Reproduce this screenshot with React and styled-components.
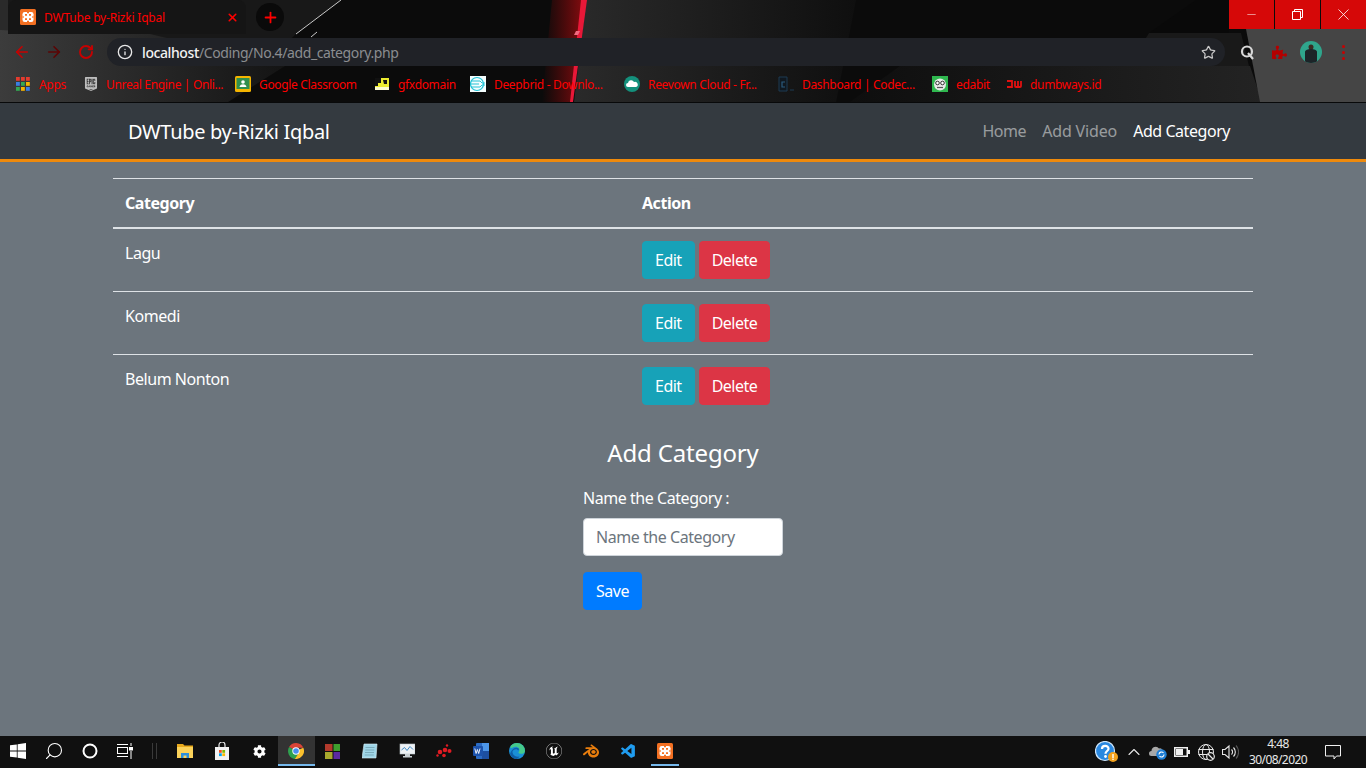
import React from 'react';
import styled, { createGlobalStyle } from 'styled-components';
import { ArrowLeft, ArrowRight, RotateCw, Info, Star, X, Plus, Minus, Search, ChevronUp } from 'lucide-react';
import { SiBlender, SiUnrealengine, SiEpicgames } from 'react-icons/si';
import { VscVscode } from 'react-icons/vsc';
import { FaPuzzlePiece, FaCog } from 'react-icons/fa';

const FONT = '"Noto Sans", "Open Sans", sans-serif';

const GlobalStyle = createGlobalStyle`
  html, body {
    margin: 0;
    padding: 0;
    height: 100%;
  }
  body {
    font-family: ${FONT};
    font-size: 16px;
    letter-spacing: -0.45px;
    color: #fff;
    background: #6c757d;
  }
  * {
    box-sizing: border-box;
  }
`;

const Page = styled.div`
  height: 768px;
  width: 1366px;
  overflow: hidden;
  display: flex;
  flex-direction: column;
`;

/* browser frame */
const BrowserFrame = styled.header`
  position: relative;
  height: 103px;
  flex: none;
  background: #0c0c0c;
  border-bottom: 1px solid #08090a;
`;

const Wallpaper = styled.div`
  position: absolute;
  inset: 0;
  height: 102px;
  overflow: hidden;
`;

const FrameContent = styled.div`
  position: relative;
`;

const TabStrip = styled.div`
  height: 34px;
  display: flex;
  align-items: flex-start;
  justify-content: space-between;
`;

const TabGroup = styled.div`
  display: flex;
  align-items: center;
  padding-left: 8px;
  height: 34px;
`;

const Tab = styled.div`
  width: 238px;
  height: 34px;
  display: flex;
  align-items: center;
  padding: 0 7px 0 12px;
  background: #151515;
  border-radius: 8px 8px 0 0;
  color: #f00;
  font-size: 12px;
`;

const TabTitle = styled.span`
  flex: 1;
  margin-left: 8px;
  letter-spacing: -0.2px;
`;

const NewTab = styled.div`
  width: 28px;
  height: 28px;
  border-radius: 50%;
  margin-left: 10px;
  background: #0a0a0a;
  color: #f00;
  display: flex;
  align-items: center;
  justify-content: center;
`;

const WindowControls = styled.div`
  display: flex;
  gap: 1px;
`;

const WindowButton = styled.div`
  width: 45px;
  height: 29px;
  background: #d60808;
  color: #fff;
  display: flex;
  align-items: center;
  justify-content: center;
`;

const Toolbar = styled.div`
  height: 36px;
  display: flex;
  align-items: center;
  padding-left: 6px;
`;

const NavIcon = styled.div`
  width: 32px;
  display: flex;
  justify-content: center;
  color: ${(p) => p.$color || '#c70000'};
`;

const Omnibox = styled.div`
  width: 1118px;
  height: 28px;
  margin-left: 5px;
  border-radius: 14px;
  background: #202227;
  display: flex;
  align-items: center;
  padding: 0 9px 0 10px;
  font-size: 14px;
  color: #8b8d90;
`;

const Url = styled.div`
  flex: 1;
  margin-left: 9px;
  letter-spacing: -0.4px;
  b {
    font-weight: 500;
    color: #f2f2f2;
  }
`;

const ToolIcons = styled.div`
  display: flex;
  align-items: center;
  margin-left: 6px;
`;

const ToolIcon = styled.div`
  width: 32px;
  height: 28px;
  display: flex;
  align-items: center;
  justify-content: center;
`;

const Avatar = styled.div`
  width: 22px;
  height: 22px;
  border-radius: 50%;
  background: #2fa58c;
  overflow: hidden;
  display: flex;
  align-items: flex-end;
  justify-content: center;
`;

const MenuDots = styled.div`
  display: flex;
  flex-direction: column;
  gap: 3px;
  i {
    width: 3px;
    height: 3px;
    border-radius: 50%;
    background: #c70000;
  }
`;

const BookmarksBar = styled.div`
  height: 32px;
  padding: 0 0 4px 15px;
  display: flex;
  align-items: center;
`;

const Bookmark = styled.div`
  width: ${(p) => p.$width}px;
  flex: none;
  display: flex;
  align-items: center;
  gap: ${(p) => p.$gap || 8}px;
  font-size: 12px;
  color: #f00;
  white-space: nowrap;
  letter-spacing: -0.33px;
`;

const FaviconBox = styled.div`
  width: 16px;
  height: 16px;
  flex: none;
  display: flex;
  align-items: center;
  justify-content: center;
`;

/* page */
const Navbar = styled.nav`
  flex: none;
  height: 59px;
  background: #343a40;
  border-bottom: 3px solid #ef8a0c;
`;

const NavInner = styled.div`
  width: 1140px;
  height: 56px;
  margin: 0 auto;
  padding: 0 15px;
  display: flex;
  align-items: center;
  justify-content: space-between;
`;

const Brand = styled.div`
  font-size: 20px;
  letter-spacing: -0.33px;
  color: #fff;
`;

const NavLinks = styled.div`
  display: flex;
`;

const NavLink = styled.a`
  padding: 8px;
  letter-spacing: ${(p) => p.$spacing || '-0.45px'};
  color: ${(p) => (p.$active ? '#fff' : 'rgba(255, 255, 255, 0.5)')};
`;

const Main = styled.main`
  flex: 1;
  width: 1140px;
  margin: 0 auto;
  padding-top: 16px;
`;

const Table = styled.table`
  width: 100%;
  border-collapse: collapse;
  table-layout: fixed;
  color: #fff;
  margin-bottom: 18px;
`;

const HeadCell = styled.th`
  text-align: left;
  padding: 12px;
  line-height: 24px;
  font-weight: 700;
  border-top: 1px solid #dee2e6;
  border-bottom: 2px solid #dee2e6;
  width: ${(p) => p.$width || 'auto'};
`;

const Cell = styled.td`
  padding: 12px;
  line-height: 24px;
  vertical-align: top;
  border-top: 1px solid #dee2e6;
  tr:first-child > & {
    border-top: 0;
  }
`;

const Actions = styled.div`
  display: flex;
  gap: 4px;
`;

const Button = styled.button`
  height: 38px;
  padding: 0 12px;
  border: 1px solid ${(p) => p.$bg};
  border-radius: 4px;
  background: ${(p) => p.$bg};
  color: #fff;
  font-family: ${FONT};
  font-size: 16px;
  letter-spacing: -0.5px;
  line-height: 24px;
`;

const FormBox = styled.form`
  width: 200px;
  margin: 0 auto;
`;

const FormTitle = styled.h3`
  margin: 0 0 15px;
  font-size: 24px;
  font-weight: 400;
  letter-spacing: -0.17px;
  line-height: 36px;
  text-align: center;
  white-space: nowrap;
`;

const Label = styled.label`
  display: block;
  margin-bottom: 8px;
  line-height: 24px;
  white-space: nowrap;
`;

const Input = styled.input`
  display: block;
  width: 200px;
  height: 38px;
  padding: 6px 12px;
  margin-bottom: 16px;
  border: 1px solid #ced4da;
  border-radius: 4px;
  background: #fff;
  font-family: ${FONT};
  font-size: 16px;
  letter-spacing: -0.45px;
  &::placeholder {
    color: #6c757d;
    opacity: 1;
  }
`;

/* taskbar */
const Taskbar = styled.footer`
  flex: none;
  height: 32px;
  background: #101010;
  display: flex;
  align-items: stretch;
  justify-content: space-between;
`;

const TaskGroup = styled.div`
  display: flex;
  align-items: stretch;
`;

const TaskItem = styled.div`
  width: ${(p) => (p.$open ? 28 : p.$width || 36.9)}px;
  margin: 0 ${(p) => (p.$open ? 4.45 : 0)}px 2px;
  display: flex;
  align-items: center;
  justify-content: center;
  color: #fff;
  background: ${(p) => (p.$active ? '#333' : 'transparent')};
  border-bottom: 2px solid ${(p) => (p.$active || p.$open ? '#76b9ed' : 'transparent')};
  background-clip: padding-box;
  padding-top: 2px;
`;

const MirroredSearch = styled(Search)`
  transform: scaleX(-1);
`;

const Separator = styled.div`
  width: 25px;
  display: flex;
  justify-content: center;
  align-items: center;
  gap: 3px;
  padding-bottom: 2px;
  i {
    width: 1px;
    height: 16px;
    background: #3a3a3a;
  }
`;

const TrayItem = styled.div`
  width: ${(p) => p.$width || 24}px;
  display: flex;
  align-items: center;
  justify-content: center;
  color: #e8e8e8;
`;

const Clock = styled.div`
  width: 72px;
  display: flex;
  flex-direction: column;
  align-items: center;
  justify-content: center;
  font-size: 12px;
  line-height: 16px;
  color: #e8e8e8;
  letter-spacing: -0.6px;
`;

/* drawn icons */
const XamppIcon = ({ size = 16 }) => (
  <svg width={size} height={size} viewBox="0 0 16 16">
    <rect width="16" height="16" rx="1.5" fill="#f37022" />
    <rect x="2.500" y="3" width="11" height="10" rx="2.200" fill="#fff" />
    <path d="M7 3h2v1.300H7zM7 11.700h2V13H7zM2.500 7.200h1.300v1.600H2.500zM12.200 7.200h1.300v1.600h-1.300z" fill="#f37022" />
    <path d="M5 5h2v1.800H5zM9 5h2v1.800H9zM5 9.200h2V11H5zM9 9.200h2V11H9z" fill="#f37022" />
  </svg>
);

const AppsGrid = () => {
  const colors = ['#e33b2e', '#e33b2e', '#e33b2e', '#3a7ee4', '#34a853', '#f4b400', '#34a853', '#f4b400', '#3a7ee4'];
  return (
    <svg width="14" height="14" viewBox="0 0 14 14">
      {colors.map((c, i) => (
        <rect key={i} x={(i % 3) * 5} y={Math.floor(i / 3) * 5} width="3.8" height="3.8" fill={c} />
      ))}
    </svg>
  );
};

const ClassroomIcon = () => (
  <svg width="16" height="16" viewBox="0 0 16 16">
    <rect width="16" height="16" rx="1.5" fill="#f4b400" />
    <rect x="1.500" y="2" width="13" height="11" fill="#2f8f4e" />
    <circle cx="8" cy="6" r="1.800" fill="#fff" />
    <path d="M4.500 11c.4-2 2-2.700 3.500-2.700s3.100.7 3.500 2.700z" fill="#fff" />
  </svg>
);

const GfxIcon = () => (
  <svg width="14" height="12" viewBox="0 0 14 12">
    <rect width="14" height="12" fill="#ecec30" />
    <path d="M0 0h6v5H3v3H0zM8 2h4v4H9z" fill="#111" />
    <path d="M0 9h14v3H0z" fill="#fbfbd0" />
  </svg>
);

const DeepbridIcon = () => (
  <svg width="16" height="16" viewBox="0 0 16 16">
    <rect width="16" height="16" fill="#f4fdfe" />
    <circle cx="7" cy="8" r="6.500" fill="none" stroke="#22c3d6" strokeWidth="1.200" />
    <path d="M1 5h9l2 2h3M1 8h8M1 11h9l2-2h3" fill="none" stroke="#22c3d6" strokeWidth="1" />
  </svg>
);

const CloudIcon = () => (
  <svg width="16" height="16" viewBox="0 0 16 16">
    <circle cx="8" cy="8" r="8" fill="#14907c" />
    <path d="M4 11a2 2 0 0 1 0-4 3.200 3.200 0 0 1 6-1 2.600 2.600 0 0 1 2 5z" fill="#fff" />
  </svg>
);

const CodecIcon = () => (
  <svg width="16" height="16" viewBox="0 0 16 16">
    <path d="M1 1h8v14H1z" fill="#101820" stroke="#1d3a52" strokeWidth="1" />
    <path d="M7 6H4v5h3" fill="none" stroke="#2a5a7d" strokeWidth="1.200" />
    <path d="M12 14h4" stroke="#1d3a52" />
  </svg>
);

const EdabitIcon = () => (
  <svg width="16" height="16" viewBox="0 0 16 16">
    <rect width="16" height="16" fill="#2fb84f" />
    <circle cx="8" cy="8.500" r="6" fill="#e8e8e8" />
    <circle cx="5.500" cy="7" r="1.800" fill="#fff" stroke="#333" />
    <circle cx="10.500" cy="7" r="1.800" fill="#fff" stroke="#333" />
    <path d="M5 11.500h6" stroke="#555" strokeWidth="1.200" />
  </svg>
);

const DumbwaysIcon = () => (
  <svg width="16" height="12" viewBox="0 0 16 12">
    <path d="M1 3h5v6H1M9 3v5a1 1 0 0 0 1 1h4a1 1 0 0 0 1-1V3M12 3v5" fill="none" stroke="#e01010" strokeWidth="1.800" />
  </svg>
);

const QIcon = () => (
  <svg width="15" height="16" viewBox="0 0 15 16">
    <circle cx="7" cy="7.500" r="5" fill="none" stroke="#d8d8d8" strokeWidth="2.200" />
    <path d="M8 9l5 6" stroke="#d8d8d8" strokeWidth="2.200" />
  </svg>
);

const AvatarFigure = () => (
  <svg width="14" height="20" viewBox="0 0 14 20">
    <circle cx="7" cy="4" r="2.500" fill="#3b2a22" />
    <path d="M1 20V9c0-2 3-3 6-3s6 1 6 3v11z" fill="#1c2428" />
  </svg>
);

const WindowsLogo = () => (
  <svg width="16" height="16" viewBox="0 0 16 16" fill="#fff">
    <path d="M0 2.300l6.800-.9v6.200H0zM7.600 1.300L16 0v7.600H7.600zM0 8.400h6.800v6.200L0 13.700zM7.600 8.400H16V16l-8.400-1.200z" />
  </svg>
);

const CortanaRing = () => (
  <svg width="16" height="16" viewBox="0 0 16 16">
    <circle cx="8" cy="8" r="6.500" fill="none" stroke="#fff" strokeWidth="2" />
  </svg>
);

const TaskViewIcon = () => (
  <svg width="16" height="16" viewBox="0 0 16 16" fill="none" stroke="#fff">
    <rect x="0.500" y="4.500" width="10" height="6" />
    <path d="M0 1.500h11M0 13.500h11M14 0v3M14 8v8" />
    <rect x="12.500" y="4.500" width="3" height="2.500" fill="#fff" />
  </svg>
);

const ExplorerIcon = () => (
  <svg width="16" height="16" viewBox="0 0 16 16">
    <path d="M0 1h6l1.500 1.500H16V15H0z" fill="#e8a91c" />
    <path d="M0 4h16v11H0z" fill="#fbd25a" />
    <path d="M4 15v-5h8v5h-2.500v-2.500h-3V15z" fill="#2b8fdc" />
  </svg>
);

const StoreIcon = () => (
  <svg width="16" height="18" viewBox="0 0 16 18">
    <path d="M5 5V3a3 3 0 0 1 6 0v2" fill="none" stroke="#e8e8e8" strokeWidth="1.200" />
    <path d="M1 5h14v13H1z" fill="#f2f2f2" />
    <path d="M5 8h2.800v2.800H5z" fill="#f25022" />
    <path d="M8.300 8h2.800v2.800H8.300z" fill="#7fba00" />
    <path d="M5 11.300h2.800v2.800H5z" fill="#00a4ef" />
    <path d="M8.300 11.300h2.800v2.800H8.300z" fill="#ffb900" />
  </svg>
);

const ChromeIcon = () => (
  <svg width="16" height="16" viewBox="0 0 16 16">
    <path d="M8 8L1.100 4A8 8 0 0 1 15.300 4.700L8 4.700z" fill="#db4437" />
    <path d="M8 8l-6.900-4A8 8 0 0 0 6.800 15.900L10.700 10z" fill="#2fa14f" />
    <path d="M8 8l7.300-3.300A8 8 0 0 1 6.800 15.900L10.700 10z" fill="#fbc02d" />
    <circle cx="8" cy="8" r="3.700" fill="#fff" />
    <circle cx="8" cy="8" r="2.800" fill="#4a8ff0" />
  </svg>
);

const OfficeTiles = () => (
  <svg width="16" height="16" viewBox="0 0 16 16">
    <path d="M0 1h7.500v7H0z" fill="#b23a2c" />
    <path d="M8.500 1H15v7H8.500z" fill="#3f9e2e" />
    <path d="M0 9h7.500v7H0z" fill="#a8a82c" />
    <path d="M8.500 9H15v7H8.500z" fill="#5b2aa0" />
  </svg>
);

const NotepadIcon = () => (
  <svg width="16" height="16" viewBox="0 0 16 16">
    <path d="M2 1h13l-1 14H0z" fill="#9fd6e8" stroke="#d8eef5" strokeWidth="0.600" />
    <path d="M3.500 4.500h9M3.300 7h9M3 9.500h9M2.800 12h9" stroke="#6c99a8" strokeWidth="0.700" />
  </svg>
);

const MonitorIcon = () => (
  <svg width="16" height="16" viewBox="0 0 16 16">
    <rect x="1" y="1" width="15" height="10" fill="#eef2f5" stroke="#b8c2c8" strokeWidth="0.600" />
    <path d="M2.500 7l3-2.500 2.500 3 3-4 3 3" fill="none" stroke="#2d7fc0" strokeWidth="0.900" />
    <path d="M6 11h5v2h2v1.500H4V13h2z" fill="#c8d0d4" />
  </svg>
);

const RedDots = () => (
  <svg width="16" height="14" viewBox="0 0 16 14" fill="#e01b22">
    <circle cx="4" cy="8" r="2.300" />
    <circle cx="9" cy="6" r="2.300" />
    <circle cx="13.500" cy="7" r="2" />
    <circle cx="8" cy="11.500" r="1.800" />
    <circle cx="11" cy="1.500" r="1.200" />
    <circle cx="1.500" cy="11.500" r="1.200" />
  </svg>
);

const WordIcon = () => (
  <svg width="16" height="16" viewBox="0 0 16 16">
    <rect x="3" y="0" width="13" height="16" rx="1" fill="#2b6bc4" />
    <path d="M9 0h7v8H9z" fill="#4d96e8" />
    <path d="M9 8h7v8H9z" fill="#1d4fa0" />
    <rect x="0" y="3" width="10" height="10" rx="1" fill="#1c52ab" />
    <path d="M1.800 5.500l1.300 5 1.300-4 1.300 4 1.300-5" fill="none" stroke="#fff" strokeWidth="0.900" />
  </svg>
);

const EdgeIcon = () => (
  <svg width="16" height="16" viewBox="0 0 16 16">
    <circle cx="8" cy="8" r="8" fill="#1a8fd6" />
    <path d="M8 0a8 8 0 0 1 8 8c0 2-2 2.800-4 2.800-1.500 0-2.500-.5-2.500-1.500C12 6 9 3 5 4 3.500 4.500 2 6 1.200 4 2.500 1.500 5 0 8 0z" fill="#45c98a" />
    <path d="M9 7.500C9 6 5 5 3.500 8.500 3 11 6 14.500 10 13.500c1 .2-1 1.500-2 2.500-3 .2-6-2-7-5 1-3 4-7 7-6 2 0 2.500 1.500 1 2.500z" fill="#0e5fa8" />
  </svg>
);

const HelpBadge = () => (
  <svg width="24" height="22" viewBox="0 0 24 22">
    <circle cx="10" cy="10" r="9.500" fill="#2a88e0" stroke="#cfe6fb" strokeWidth="1.200" />
    <path d="M7 8c0-4 6.500-4 6.500-.3 0 2.300-3 2.300-3 5" fill="none" stroke="#fff" strokeWidth="2.200" />
    <circle cx="10.500" cy="15.500" r="1.400" fill="#fff" />
    <circle cx="18" cy="16" r="5" fill="#f3a21e" />
    <rect x="17.300" y="13" width="1.400" height="4" fill="#fff" />
    <rect x="17.300" y="17.600" width="1.400" height="1.400" fill="#fff" />
  </svg>
);

const CloudSync = () => (
  <svg width="18" height="15" viewBox="0 0 18 15">
    <path d="M2.500 11a2.500 2.500 0 0 1 0-5A4.200 4.200 0 0 1 10 3.500a3 3 0 0 1 3 5v2.500z" fill="#a8a8a8" />
    <circle cx="12.500" cy="9.500" r="5.200" fill="#1f7fd6" />
    <path d="M10 9.500a2.500 2.500 0 0 1 4.500-1.500M15 9.500a2.500 2.500 0 0 1-4.500 1.500" fill="none" stroke="#fff" strokeWidth="1.100" />
  </svg>
);

const BatteryIcon = () => (
  <svg width="16" height="10" viewBox="0 0 16 10">
    <rect x="0.750" y="0.750" width="12.500" height="8.500" fill="none" stroke="#f0f0f0" strokeWidth="1.500" />
    <rect x="2" y="2" width="7" height="6" fill="#f0f0f0" />
    <rect x="14" y="3" width="2" height="4" fill="#f0f0f0" />
  </svg>
);

const GlobeNoNetwork = () => (
  <svg width="17" height="17" viewBox="0 0 17 17" fill="none" stroke="#e8e8e8" strokeWidth="1">
    <circle cx="8" cy="8" r="7.500" />
    <ellipse cx="8" cy="8" rx="3.500" ry="7.500" />
    <path d="M.5 5.500h15M.5 10.500h15" />
    <circle cx="12.500" cy="12.500" r="3.800" fill="#101010" strokeWidth="1.200" />
    <path d="M10 10l5 5" strokeWidth="1.200" />
  </svg>
);

const SpeakerIcon = () => (
  <svg width="17" height="16" viewBox="0 0 17 16" fill="none" strokeWidth="1.100">
    <path d="M.5 5.500H3L7 2v12l-4-3.500H.5z" stroke="#e8e8e8" />
    <path d="M9.500 5.500a3.500 3.500 0 0 1 0 5M11.500 3.500a6.500 6.500 0 0 1 0 9" stroke="#e8e8e8" />
    <path d="M14 1.500a9.500 9.500 0 0 1 0 13" stroke="#555" />
  </svg>
);

const NotificationIcon = () => (
  <svg width="16" height="16" viewBox="0 0 16 16" fill="none" stroke="#f0f0f0" strokeWidth="1">
    <path d="M.5 1.500h15v10.500h-4l-2.500 3v-3H.5z" />
  </svg>
);

const WallpaperArt = () => (
  <svg width="1366" height="102" viewBox="0 0 1366 102">
    <defs>
      <linearGradient id="greyLeft" x1="0" y1="0" x2="1" y2="0">
        <stop offset="0" stopColor="#3c3c3c" />
        <stop offset="1" stopColor="#141414" />
      </linearGradient>
      <linearGradient id="greyMid" x1="0" y1="0" x2="1" y2="0">
        <stop offset="0" stopColor="#2a2a2a" />
        <stop offset="1" stopColor="#0f0f0f" />
      </linearGradient>
      <linearGradient id="greyRight" x1="0" y1="0" x2="1" y2="0">
        <stop offset="0" stopColor="#0e0e0e" />
        <stop offset="1" stopColor="#232323" />
      </linearGradient>
      <linearGradient id="glow" x1="0" y1="0" x2="1" y2="0">
        <stop offset="0" stopColor="#7a0808" stopOpacity="0" />
        <stop offset="1" stopColor="#8a0c10" />
      </linearGradient>
    </defs>
    <rect width="1366" height="102" fill="#0b0b0b" />
    <path d="M0 0h341L296 34 225 102H0z" fill="#181818" />
    <path d="M0 0h8v30H0z" fill="#2a2a2a" />
    <path d="M0 30L150 34 285 66 228 102H0z" fill="url(#greyLeft)" />
    <path d="M586 0h270l-20 102H574z" fill="url(#greyMid)" />
    <path d="M900 66h350l12 36H850z" fill="url(#greyRight)" />
    <path d="M1196 0l-47 33h80V0z" fill="#090909" />
    <path d="M1149 33l-20 33h120l-8-33z" fill="#191919" />
    <path d="M1246 29h120v73h-106z" fill="#454545" />
    <path d="M552 0h33l-13 102h-30z" fill="url(#glow)" />
    <path d="M581 0h6l-14 102h-3z" fill="#e81838" />
    <path d="M576 31h4l-2 4h-4z" fill="#f06a80" />
    <path d="M341 0L296 34" stroke="#c9c9c9" strokeWidth="1" />
    <path d="M317 32l-6 5" stroke="#c9c9c9" strokeWidth="1" />
  </svg>
);

const BOOKMARKS = [
  { label: 'Apps', width: 68, icon: <AppsGrid /> },
  { label: 'Unreal Engine | Onli...', width: 152, gap: 7, icon: <SiEpicgames size={14} color="#bdbdbd" /> },
  { label: 'Google Classroom', width: 139, icon: <ClassroomIcon /> },
  { label: 'gfxdomain', width: 96, icon: <GfxIcon /> },
  { label: 'Deepbrid - Downlo...', width: 154, icon: <DeepbridIcon /> },
  { label: 'Reevown Cloud - Fr...', width: 154, icon: <CloudIcon /> },
  { label: 'Dashboard | Codec...', width: 154, icon: <CodecIcon /> },
  { label: 'edabit', width: 74, icon: <EdabitIcon /> },
  { label: 'dumbways.id', width: 110, icon: <DumbwaysIcon /> },
];

const CATEGORIES = ['Lagu', 'Komedi', 'Belum Nonton'];

const App = () => (
  <Page>
    <GlobalStyle />
    <BrowserFrame>
      <Wallpaper>
        <WallpaperArt />
      </Wallpaper>
      <FrameContent>
        <TabStrip>
          <TabGroup>
            <Tab>
              <XamppIcon />
              <TabTitle>DWTube by-Rizki Iqbal</TabTitle>
              <X size={13} strokeWidth={3} />
            </Tab>
            <NewTab>
              <Plus size={17} strokeWidth={2.5} />
            </NewTab>
          </TabGroup>
          <WindowControls>
            <WindowButton>
              <Minus size={13} strokeWidth={1} />
            </WindowButton>
            <WindowButton>
              <svg width="11" height="11" viewBox="0 0 11 11" fill="none" stroke="#fff">
                <path d="M.5 2.500h8v8h-8zM2.500 2.500v-2h8v8h-2" />
              </svg>
            </WindowButton>
            <WindowButton>
              <X size={19} strokeWidth={1} />
            </WindowButton>
          </WindowControls>
        </TabStrip>
        <Toolbar>
          <NavIcon>
            <ArrowLeft size={18} strokeWidth={2.2} />
          </NavIcon>
          <NavIcon $color="#5c0505">
            <ArrowRight size={18} strokeWidth={2.2} />
          </NavIcon>
          <NavIcon>
            <RotateCw size={16} strokeWidth={2.8} />
          </NavIcon>
          <Omnibox>
            <Info size={16} color="#e8e8e8" strokeWidth={2} />
            <Url>
              <b>localhost</b>/Coding/No.4/add_category.php
            </Url>
            <Star size={15} color="#c8c8c8" strokeWidth={2} />
          </Omnibox>
          <ToolIcons>
            <ToolIcon>
              <QIcon />
            </ToolIcon>
            <ToolIcon>
              <FaPuzzlePiece size={15} color="#b30000" />
            </ToolIcon>
            <ToolIcon>
              <Avatar>
                <AvatarFigure />
              </Avatar>
            </ToolIcon>
            <ToolIcon>
              <MenuDots>
                <i />
                <i />
                <i />
              </MenuDots>
            </ToolIcon>
          </ToolIcons>
        </Toolbar>
        <BookmarksBar>
          {BOOKMARKS.map((b) => (
            <Bookmark key={b.label} $width={b.width} $gap={b.gap}>
              <FaviconBox>{b.icon}</FaviconBox>
              {b.label}
            </Bookmark>
          ))}
        </BookmarksBar>
      </FrameContent>
    </BrowserFrame>

    <Navbar>
      <NavInner>
        <Brand>DWTube by-Rizki Iqbal</Brand>
        <NavLinks>
          <NavLink>Home</NavLink>
          <NavLink $spacing="-0.15px">Add Video</NavLink>
          <NavLink $active>Add Category</NavLink>
        </NavLinks>
      </NavInner>
    </Navbar>

    <Main>
      <Table>
        <thead>
          <tr>
            <HeadCell $width="517px">Category</HeadCell>
            <HeadCell>Action</HeadCell>
          </tr>
        </thead>
        <tbody>
          {CATEGORIES.map((name) => (
            <tr key={name}>
              <Cell>{name}</Cell>
              <Cell>
                <Actions>
                  <Button type="button" $bg="#17a2b8">Edit</Button>
                  <Button type="button" $bg="#dc3545">Delete</Button>
                </Actions>
              </Cell>
            </tr>
          ))}
        </tbody>
      </Table>
      <FormBox>
        <FormTitle>Add Category</FormTitle>
        <Label>Name the Category :</Label>
        <Input placeholder="Name the Category" />
        <Button type="button" $bg="#007bff">Save</Button>
      </FormBox>
    </Main>

    <Taskbar>
      <TaskGroup>
        <TaskItem $width={36}><WindowsLogo /></TaskItem>
        <TaskItem $width={36}><MirroredSearch size={20} strokeWidth={1.3} /></TaskItem>
        <TaskItem $width={35}><CortanaRing /></TaskItem>
        <TaskItem $width={35}><TaskViewIcon /></TaskItem>
        <Separator><i /><i /></Separator>
        <TaskItem><ExplorerIcon /></TaskItem>
        <TaskItem><StoreIcon /></TaskItem>
        <TaskItem><FaCog size={13} /></TaskItem>
        <TaskItem $active><ChromeIcon /></TaskItem>
        <TaskItem><OfficeTiles /></TaskItem>
        <TaskItem><NotepadIcon /></TaskItem>
        <TaskItem><MonitorIcon /></TaskItem>
        <TaskItem><RedDots /></TaskItem>
        <TaskItem><WordIcon /></TaskItem>
        <TaskItem><EdgeIcon /></TaskItem>
        <TaskItem><SiUnrealengine size={16} /></TaskItem>
        <TaskItem><SiBlender size={16} color="#e87d0d" /></TaskItem>
        <TaskItem><VscVscode size={17} color="#1f9cf0" /></TaskItem>
        <TaskItem $open><XamppIcon /></TaskItem>
      </TaskGroup>
      <TaskGroup>
        <TrayItem $width={30}><HelpBadge /></TrayItem>
        <TrayItem><ChevronUp size={20} strokeWidth={1.3} /></TrayItem>
        <TrayItem><CloudSync /></TrayItem>
        <TrayItem><BatteryIcon /></TrayItem>
        <TrayItem><GlobeNoNetwork /></TrayItem>
        <TrayItem><SpeakerIcon /></TrayItem>
        <Clock>
          <span>4:48</span>
          <span>30/08/2020</span>
        </Clock>
        <TrayItem $width={38}><NotificationIcon /></TrayItem>
        <TrayItem $width={14} />
      </TaskGroup>
    </Taskbar>
  </Page>
);

export default App;
